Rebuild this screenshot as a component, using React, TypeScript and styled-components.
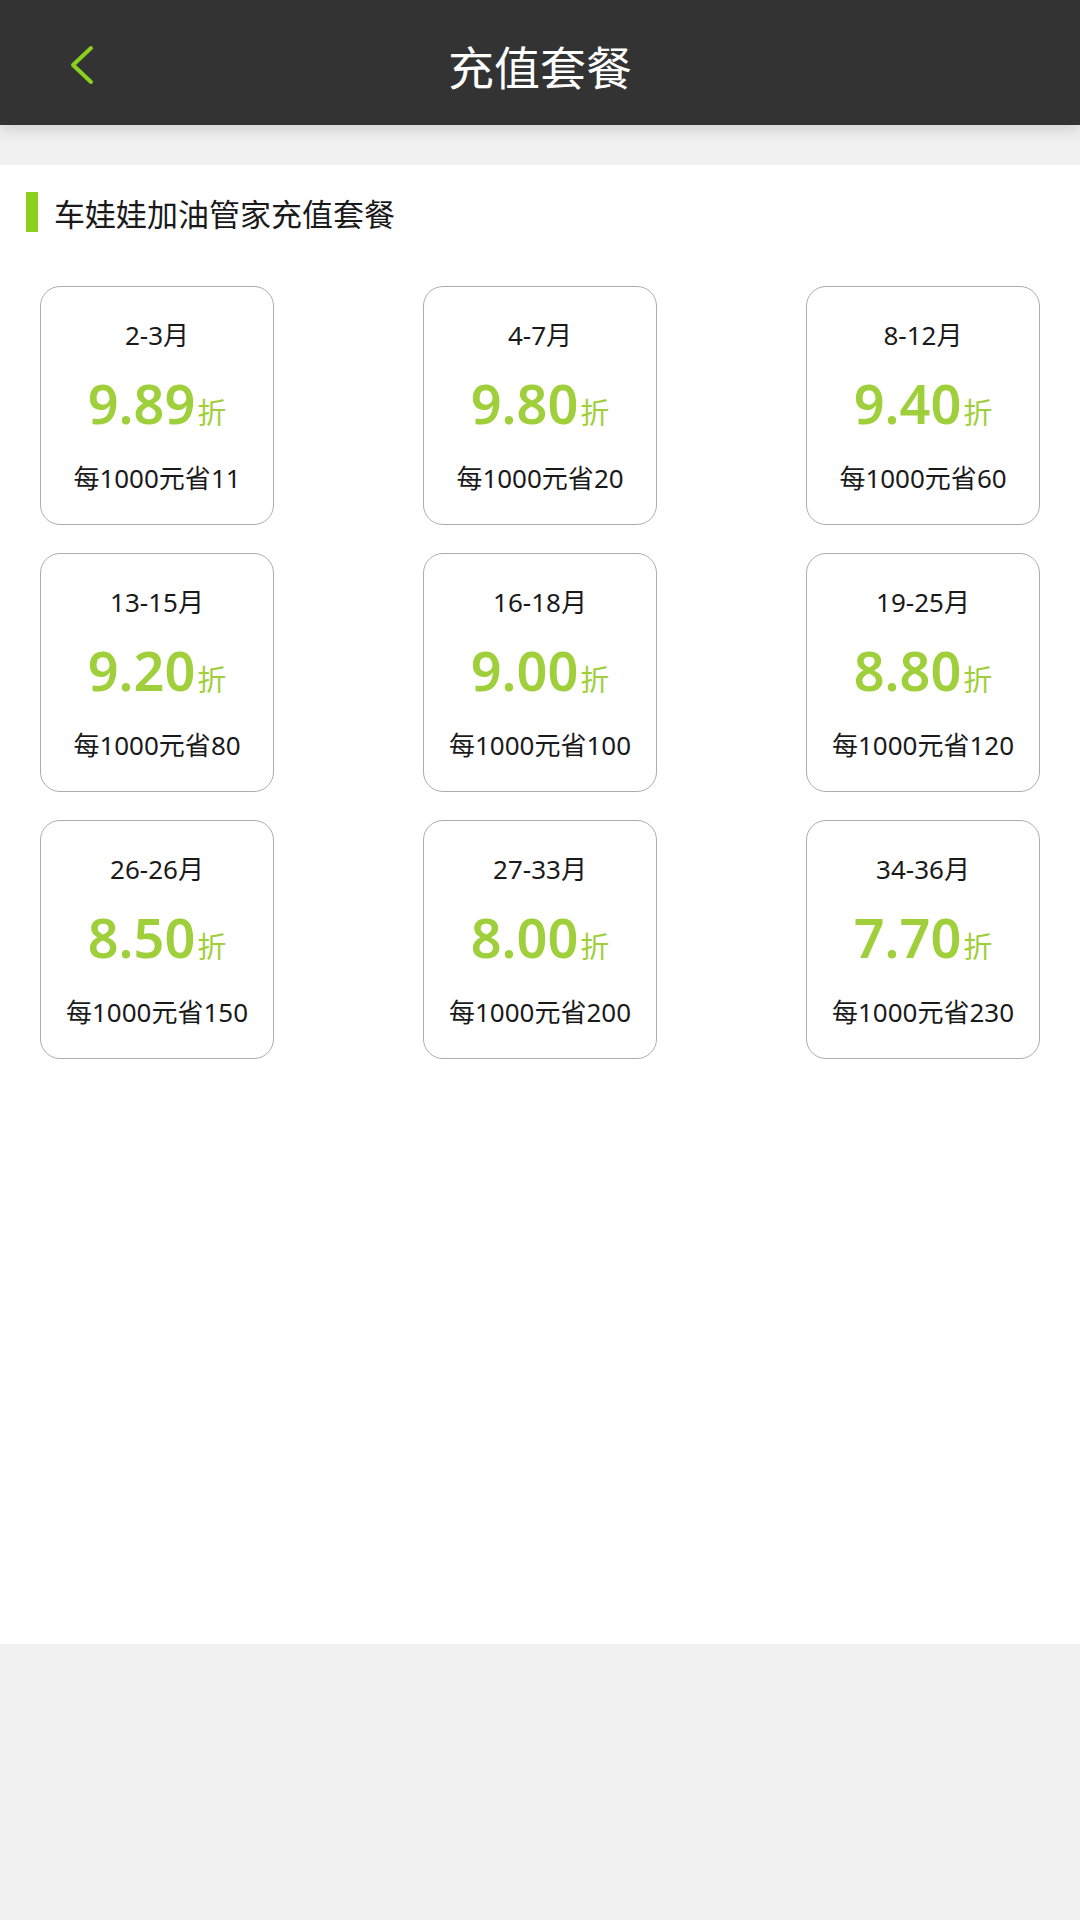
import React from 'react'
import styled, { createGlobalStyle } from 'styled-components'

const GlobalStyle = createGlobalStyle`
  html, body {
    margin: 0;
    padding: 0;
    background: #f1f1f1;
    font-family: "Noto Sans", "Noto Sans CJK SC", sans-serif;
  }
`

const plans = [
  { months: '2-3月', rate: '9.89', save: 11 },
  { months: '4-7月', rate: '9.80', save: 20 },
  { months: '8-12月', rate: '9.40', save: 60 },
  { months: '13-15月', rate: '9.20', save: 80 },
  { months: '16-18月', rate: '9.00', save: 100 },
  { months: '19-25月', rate: '8.80', save: 120 },
  { months: '26-26月', rate: '8.50', save: 150 },
  { months: '27-33月', rate: '8.00', save: 200 },
  { months: '34-36月', rate: '7.70', save: 230 },
]

const App = () => {
  return (
    <Page>
      <GlobalStyle />
      <Header>
        <Back>
          <svg width="24" height="40" viewBox="0 0 24 40">
            <polyline points="21,3 3,20 21,37" fill="none" stroke="#8ad11f" strokeWidth="4" strokeLinecap="round" strokeLinejoin="round" />
          </svg>
        </Back>
        <Title>充值套餐</Title>
        <div />
      </Header>
      <Section>
        <SectionTitle>车娃娃加油管家充值套餐</SectionTitle>
        <Grid>
          {plans.map((p) => (
            <Card key={p.months}>
              <Months>{p.months}</Months>
              <Rate>
                {p.rate}
                <Unit>折</Unit>
              </Rate>
              <Save>每1000元省{p.save}</Save>
            </Card>
          ))}
        </Grid>
      </Section>
    </Page>
  )
}

export default App

const Page = styled.div`
  min-height: 1920px;
  background: #f1f1f1;
  padding-bottom: 1px;
`
const Header = styled.div`
  height: 125px;
  background-color: #333333;
  display: grid;
  grid-template-columns: 1fr auto 1fr;
  align-items: center;
  box-shadow: rgba(0, 0, 0, 0.12) 0px 6px 14px;
  position: relative;
  z-index: 1;
`
const Back = styled.div`
  padding-left: 70px;
  padding-top: 4px;
  display: flex;
  align-items: center;
`
const Title = styled.div`
  color: #ffffff;
  font-size: 46px;
  font-family: "Noto Sans CJK SC", sans-serif;
  padding-top: 4px;
`
const Section = styled.div`
  margin-top: 40px;
  height: 1479px;
  background: #ffffff;
  padding-top: 27px;
  box-sizing: border-box;
`
const SectionTitle = styled.div`
  display: flex;
  align-items: center;
  height: 40px;
  margin-left: 26px;
  padding-left: 16px;
  border-left: 12px solid #8ccf1f;
  font-size: 31px;
  color: #1a1a1a;
  font-family: "Noto Sans CJK SC", sans-serif;
`
const Grid = styled.div`
  margin-top: 54px;
  padding: 0 40px;
  display: grid;
  grid-template-columns: repeat(3, 234px);
  justify-content: space-between;
  row-gap: 28px;
`
const Card = styled.div`
  height: 239px;
  box-sizing: border-box;
  border: 1.5px solid #adadad;
  border-radius: 20px;
  display: flex;
  flex-direction: column;
  align-items: center;
  color: #1a1a1a;
`
const Months = styled.div`
  margin-top: 30px;
  font-size: 26px;
  line-height: 36px;
`
const Rate = styled.div`
  margin-top: 20px;
  font-size: 54px;
  font-weight: 600;
  line-height: 60px;
  color: #9fcf3a;
  display: flex;
  align-items: baseline;
`
const Unit = styled.span`
  font-size: 29px;
  font-weight: 400;
  margin-left: 2px;
  font-family: "Noto Sans CJK SC", sans-serif;
`
const Save = styled.div`
  margin-top: 19px;
  font-size: 26px;
  line-height: 36px;
`
